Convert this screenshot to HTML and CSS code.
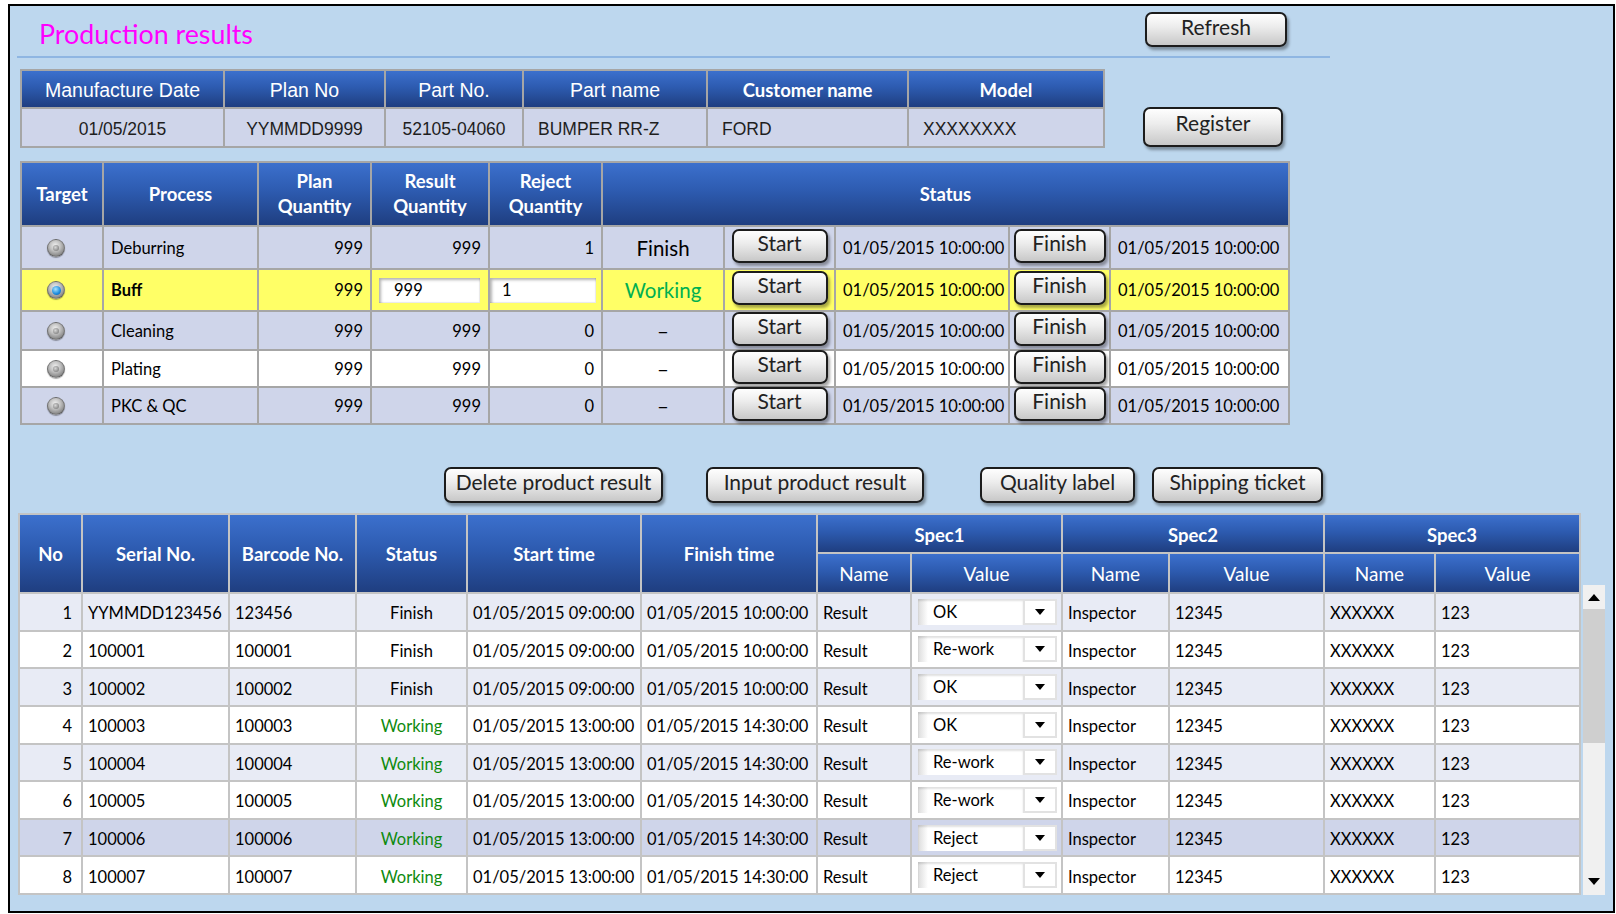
FILE: index.html
```html
<!DOCTYPE html>
<html lang="en">
<head>
<meta charset="utf-8">
<title>Production results</title>
<link rel="stylesheet" href="styles.css">
</head>
<body>
<div class="frame">
  <div class="titlebar">
    <h1 class="title">Production results</h1>
    <button class="btn btn-refresh">Refresh</button>
  </div>

  <div class="info-row">
    <div class="grid info">
      <div class="row head">
        <div class="cell lt">Manufacture Date</div>
        <div class="cell lt">Plan No</div>
        <div class="cell lt">Part No.</div>
        <div class="cell lt">Part name</div>
        <div class="cell hb">Customer name</div>
        <div class="cell hb">Model</div>
      </div>
      <div class="row lav jp">
        <div class="cell">01/05/2015</div>
        <div class="cell">YYMMDD9999</div>
        <div class="cell">52105-04060</div>
        <div class="cell l">BUMPER RR-Z</div>
        <div class="cell l">FORD</div>
        <div class="cell l">XXXXXXXX</div>
      </div>
    </div>
    <button class="btn btn-register">Register</button>
  </div>

  <div class="grid proc">
    <div class="row head">
      <div class="cell">Target</div>
      <div class="cell">Process</div>
      <div class="cell">Plan<br>Quantity</div>
      <div class="cell">Result<br>Quantity</div>
      <div class="cell">Reject<br>Quantity</div>
      <div class="cell span5">Status</div>
    </div>
    <div class="row lav">
      <div class="cell rc"><span class="radio"></span></div>
      <div class="cell l">Deburring</div>
      <div class="cell r">999</div>
      <div class="cell r">999</div>
      <div class="cell r">1</div>
      <div class="cell st">Finish</div>
      <div class="cell"><button class="btn btn-start">Start</button></div>
      <div class="cell l dt">01/05/2015 10:00:00</div>
      <div class="cell"><button class="btn btn-fin">Finish</button></div>
      <div class="cell l dt2">01/05/2015 10:00:00</div>
    </div>
    <div class="row yel">
      <div class="cell rc"><span class="radio on"></span></div>
      <div class="cell l bold">Buff</div>
      <div class="cell r">999</div>
      <div class="cell l0"><span class="inp inp-res">999</span></div>
      <div class="cell l0"><span class="inp inp-rej">1</span></div>
      <div class="cell st wk1">Working</div>
      <div class="cell"><button class="btn btn-start">Start</button></div>
      <div class="cell l dt">01/05/2015 10:00:00</div>
      <div class="cell"><button class="btn btn-fin">Finish</button></div>
      <div class="cell l dt2">01/05/2015 10:00:00</div>
    </div>
    <div class="row lav">
      <div class="cell rc"><span class="radio"></span></div>
      <div class="cell l">Cleaning</div>
      <div class="cell r">999</div>
      <div class="cell r">999</div>
      <div class="cell r">0</div>
      <div class="cell st">–</div>
      <div class="cell"><button class="btn btn-start">Start</button></div>
      <div class="cell l dt">01/05/2015 10:00:00</div>
      <div class="cell"><button class="btn btn-fin">Finish</button></div>
      <div class="cell l dt2">01/05/2015 10:00:00</div>
    </div>
    <div class="row wht">
      <div class="cell rc"><span class="radio"></span></div>
      <div class="cell l">Plating</div>
      <div class="cell r">999</div>
      <div class="cell r">999</div>
      <div class="cell r">0</div>
      <div class="cell st">–</div>
      <div class="cell"><button class="btn btn-start">Start</button></div>
      <div class="cell l dt">01/05/2015 10:00:00</div>
      <div class="cell"><button class="btn btn-fin">Finish</button></div>
      <div class="cell l dt2">01/05/2015 10:00:00</div>
    </div>
    <div class="row lav">
      <div class="cell rc"><span class="radio"></span></div>
      <div class="cell l">PKC &amp; QC</div>
      <div class="cell r">999</div>
      <div class="cell r">999</div>
      <div class="cell r">0</div>
      <div class="cell st">–</div>
      <div class="cell"><button class="btn btn-start">Start</button></div>
      <div class="cell l dt">01/05/2015 10:00:00</div>
      <div class="cell"><button class="btn btn-fin">Finish</button></div>
      <div class="cell l dt2">01/05/2015 10:00:00</div>
    </div>
  </div>

  <div class="actions">
    <button class="btn btn-act btn-del">Delete product result</button>
    <button class="btn btn-act btn-inp">Input product result</button>
    <button class="btn btn-act btn-qual">Quality label</button>
    <button class="btn btn-act btn-ship">Shipping ticket</button>
  </div>

  <div class="main-row">
    <div class="grid results">
      <div class="row head">
        <div class="cell span2r">No</div>
        <div class="cell span2r">Serial No.</div>
        <div class="cell span2r">Barcode No.</div>
        <div class="cell span2r">Status</div>
        <div class="cell span2r">Start time</div>
        <div class="cell span2r">Finish time</div>
        <div class="cell span2c">Spec1</div>
        <div class="cell span2c">Spec2</div>
        <div class="cell span2c">Spec3</div>
      </div>
      <div class="row head sub">
        <div class="cell">Name</div>
        <div class="cell">Value</div>
        <div class="cell">Name</div>
        <div class="cell">Value</div>
        <div class="cell">Name</div>
        <div class="cell">Value</div>
      </div>

      <div class="row m-alt">
        <div class="cell r">1</div>
        <div class="cell l">YYMMDD123456</div>
        <div class="cell l">123456</div>
        <div class="cell">Finish</div>
        <div class="cell l">01/05/2015 09:00:00</div>
        <div class="cell l">01/05/2015 10:00:00</div>
        <div class="cell l">Result</div>
        <div class="cell l0"><div class="dd"><span class="dd-val">OK</span><span class="dd-btn"></span></div></div>
        <div class="cell l">Inspector</div>
        <div class="cell l">12345</div>
        <div class="cell l">XXXXXX</div>
        <div class="cell l">123</div>
      </div>
      <div class="row m-wht">
        <div class="cell r">2</div>
        <div class="cell l">100001</div>
        <div class="cell l">100001</div>
        <div class="cell">Finish</div>
        <div class="cell l">01/05/2015 09:00:00</div>
        <div class="cell l">01/05/2015 10:00:00</div>
        <div class="cell l">Result</div>
        <div class="cell l0"><div class="dd"><span class="dd-val">Re-work</span><span class="dd-btn"></span></div></div>
        <div class="cell l">Inspector</div>
        <div class="cell l">12345</div>
        <div class="cell l">XXXXXX</div>
        <div class="cell l">123</div>
      </div>
      <div class="row m-alt">
        <div class="cell r">3</div>
        <div class="cell l">100002</div>
        <div class="cell l">100002</div>
        <div class="cell">Finish</div>
        <div class="cell l">01/05/2015 09:00:00</div>
        <div class="cell l">01/05/2015 10:00:00</div>
        <div class="cell l">Result</div>
        <div class="cell l0"><div class="dd"><span class="dd-val">OK</span><span class="dd-btn"></span></div></div>
        <div class="cell l">Inspector</div>
        <div class="cell l">12345</div>
        <div class="cell l">XXXXXX</div>
        <div class="cell l">123</div>
      </div>
      <div class="row m-wht">
        <div class="cell r">4</div>
        <div class="cell l">100003</div>
        <div class="cell l">100003</div>
        <div class="cell wk2">Working</div>
        <div class="cell l">01/05/2015 13:00:00</div>
        <div class="cell l">01/05/2015 14:30:00</div>
        <div class="cell l">Result</div>
        <div class="cell l0"><div class="dd"><span class="dd-val">OK</span><span class="dd-btn"></span></div></div>
        <div class="cell l">Inspector</div>
        <div class="cell l">12345</div>
        <div class="cell l">XXXXXX</div>
        <div class="cell l">123</div>
      </div>
      <div class="row m-alt">
        <div class="cell r">5</div>
        <div class="cell l">100004</div>
        <div class="cell l">100004</div>
        <div class="cell wk2">Working</div>
        <div class="cell l">01/05/2015 13:00:00</div>
        <div class="cell l">01/05/2015 14:30:00</div>
        <div class="cell l">Result</div>
        <div class="cell l0"><div class="dd"><span class="dd-val">Re-work</span><span class="dd-btn"></span></div></div>
        <div class="cell l">Inspector</div>
        <div class="cell l">12345</div>
        <div class="cell l">XXXXXX</div>
        <div class="cell l">123</div>
      </div>
      <div class="row m-wht">
        <div class="cell r">6</div>
        <div class="cell l">100005</div>
        <div class="cell l">100005</div>
        <div class="cell wk2">Working</div>
        <div class="cell l">01/05/2015 13:00:00</div>
        <div class="cell l">01/05/2015 14:30:00</div>
        <div class="cell l">Result</div>
        <div class="cell l0"><div class="dd"><span class="dd-val">Re-work</span><span class="dd-btn"></span></div></div>
        <div class="cell l">Inspector</div>
        <div class="cell l">12345</div>
        <div class="cell l">XXXXXX</div>
        <div class="cell l">123</div>
      </div>
      <div class="row m-sel">
        <div class="cell r">7</div>
        <div class="cell l">100006</div>
        <div class="cell l">100006</div>
        <div class="cell wk2">Working</div>
        <div class="cell l">01/05/2015 13:00:00</div>
        <div class="cell l">01/05/2015 14:30:00</div>
        <div class="cell l">Result</div>
        <div class="cell l0"><div class="dd"><span class="dd-val">Reject</span><span class="dd-btn"></span></div></div>
        <div class="cell l">Inspector</div>
        <div class="cell l">12345</div>
        <div class="cell l">XXXXXX</div>
        <div class="cell l">123</div>
      </div>
      <div class="row m-wht">
        <div class="cell r">8</div>
        <div class="cell l">100007</div>
        <div class="cell l">100007</div>
        <div class="cell wk2">Working</div>
        <div class="cell l">01/05/2015 13:00:00</div>
        <div class="cell l">01/05/2015 14:30:00</div>
        <div class="cell l">Result</div>
        <div class="cell l0"><div class="dd"><span class="dd-val">Reject</span><span class="dd-btn"></span></div></div>
        <div class="cell l">Inspector</div>
        <div class="cell l">12345</div>
        <div class="cell l">XXXXXX</div>
        <div class="cell l">123</div>
      </div>
    </div>

    <div class="scrollbar">
      <div class="sb-up"><span class="tri-up"></span></div>
      <div class="sb-thumb"></div>
      <div class="sb-track"><span class="tri-down"></span></div>
    </div>
  </div>
</div>
</body>
</html>
```

FILE: styles.css
```css
* { box-sizing: border-box; }
html, body { margin: 0; padding: 0; background: #fff; }
body { font-family: Lato, "Liberation Sans", sans-serif; color: #000; }

.frame {
  margin: 4px 0 0 8px;
  width: 1607px;
  height: 909px;
  border: 2px solid #000;
  background: #bdd7ee;
  overflow: hidden;
}

/* title bar */
.titlebar {
  display: flex;
  justify-content: space-between;
  align-items: flex-start;
  margin-left: 7px;
  width: 1313px;
  height: 52px;
  padding-right: 43px;
  border-bottom: 2px solid #8fb6e2;
}
.title {
  margin: 0;
  padding: 12px 0 0 22px;
  font: 400 26.8px/1.2 Lato, sans-serif;
  color: #ff00ff;
}

/* buttons */
.btn {
  display: flex;
  align-items: center;
  justify-content: center;
  padding: 0 0 7px;
  border: 2px solid #1c1c1c;
  border-radius: 7px;
  background: linear-gradient(#fefefe, #ededed 40%, #c8c8c8);
  box-shadow: 2px 3px 3px rgba(0, 0, 0, 0.35);
  font: 400 21px/1 Lato, sans-serif;
  color: #222;
  white-space: nowrap;
}
.btn-refresh { margin-top: 6px; width: 142px; height: 35px; }
.btn-register { margin: 38px 0 0 38px; width: 140px; height: 40px; padding-bottom: 9px; }
.btn-start { width: 96px; height: 34px; margin-bottom: 4px; flex: none; }
.btn-fin { width: 92px; height: 34px; margin-bottom: 4px; flex: none; }

/* grids */
.info-row { display: flex; align-items: flex-start; margin: 11px 0 0 10px; }
.grid {
  display: grid;
  gap: 2px;
  padding: 2px;
  background: #a6a6a6;
  width: max-content;
}
.row { display: contents; }
.cell {
  display: flex;
  align-items: center;
  justify-content: center;
  text-align: center;
  font-size: 16.5px;
  line-height: 20px;
  min-width: 0;
  white-space: nowrap;
}
.cell.l { justify-content: flex-start; padding-left: 7px; }
.cell.l0 { justify-content: flex-start; }
.cell.r { justify-content: flex-end; padding-right: 7px; }
.bold { font-weight: 700; }

.head > .cell {
  background: linear-gradient(180deg, #3c70cd 0%, #2d5bb0 45%, #1f3e80 100%);
  color: #fff;
  font-weight: 700;
  font-size: 18.5px;
  line-height: 25px;
}
.head > .cell.lt {
  font: 400 19.5px/1 "Liberation Sans", Arial, sans-serif;
  padding-top: 3px;
}
.head > .cell.hb { padding-top: 2px; }
.lav > .cell { background: #cfd5ea; }
.yel > .cell { background: #ffff66; }
.wht > .cell { background: #ffffff; }

/* info table */
.info {
  grid-template-columns: 201px 159px 136px 182px 199px 194px;
  grid-template-rows: 36px 37px;
}
.jp > .cell {
  font: 400 17.5px/1 "Liberation Sans", Arial, sans-serif;
  color: #1e1e1e;
  padding-top: 4px;
}
.jp > .cell.l { padding-left: 14px; }

/* process table */
.proc {
  margin: 13px 0 0 10px;
  grid-template-columns: 80px 153px 111px 116px 111px 120px 109px 172px 99px 177px;
  grid-template-rows: 62px 41px 40px 37px 35px 35px;
}
.span5 { grid-column: span 5; }
.rc { justify-content: flex-start; padding-left: 25px; }
.st { font-size: 20.5px; }
.wk1 { color: #00b050; }
.dt { justify-content: flex-start; padding-left: 6px; }
.dt2 { justify-content: flex-start; padding-left: 8px; }

.radio {
  display: flex;
  align-items: center;
  justify-content: center;
  width: 18px;
  height: 18px;
  border-radius: 50%;
  border: 1px solid rgba(60, 60, 60, 0.45);
  background: radial-gradient(circle at 45% 35%, #f0f0f0 0%, #c2c2c2 38%, #888 75%, #4e4e4e 100%);
  box-shadow: 0 1px 1px rgba(0, 0, 0, 0.35);
}
.radio::after {
  content: "";
  width: 6px;
  height: 6px;
  border-radius: 50%;
  background: radial-gradient(circle at 40% 40%, #d6d6d6, #6a6a6a);
}
.radio.on::after {
  width: 9px;
  height: 9px;
  background: radial-gradient(circle at 40% 35%, #a6e4ff, #1a8ade 60%, #0b4f9a);
}

.inp {
  display: flex;
  align-items: center;
  height: 25px;
  padding-left: 15px;
  background: #fff;
  box-shadow: inset 2px 2px 3px rgba(0, 0, 0, 0.3), inset -1px -1px 1px rgba(0, 0, 0, 0.08);
  font-size: 16.5px;
}
.inp-res { width: 101px; margin-left: 7px; }
.inp-rej { width: 106px; padding-left: 12px; }

/* action buttons */
.actions { display: flex; margin: 42px 0 0 434px; }
.btn-act { height: 36px; }
.btn-del { width: 219px; }
.btn-inp { width: 218px; margin-left: 43px; }
.btn-qual { width: 155px; margin-left: 56px; }
.btn-ship { width: 171px; margin-left: 17px; }

/* results table */
.main-row { display: flex; align-items: flex-start; margin: 10px 0 0 8px; }
.results {
  background: #c4c4c4;
  grid-template-columns: 61px 145px 125px 109px 172px 174px 92px 149px 105px 153px 109px 143px;
  grid-template-rows: 37px 38px repeat(8, 35.625px);
}
.span2r { grid-row: span 2; }
.span2c { grid-column: span 2; }
.results .head > .cell.span2r { padding-top: 2px; }
.results .head > .cell.span2c { padding-top: 3px; }
.head.sub > .cell { font-weight: 400; font-size: 19px; }
.results .row:not(.head) > .cell { padding-top: 3px; }
.results .cell.l { padding-left: 5px; }
.results .cell.r { padding-right: 9px; }
.m-alt > .cell { background: #e8ebf5; }
.m-wht > .cell { background: #ffffff; }
.m-sel > .cell { background: #cfd5ea; }
.wk2 { color: #0e8a0e; }

.dd { display: flex; width: 139px; height: 26px; margin: 0 0 3px 6px; }
.dd-val {
  flex: 1;
  display: flex;
  align-items: center;
  padding-left: 15px;
  background: linear-gradient(90deg, #dcdcdc 0, #ffffff 10px);
  box-shadow: inset 0 2px 2px rgba(0, 0, 0, 0.12);
  font-size: 16.5px;
}
.dd-btn {
  display: flex;
  align-items: center;
  justify-content: center;
  width: 34px;
  background: #fff;
  border: 2px solid #e2e2e2;
}
.dd-btn::after {
  content: "";
  border-left: 5px solid transparent;
  border-right: 5px solid transparent;
  border-top: 6px solid #000;
}

/* scrollbar */
.scrollbar {
  display: flex;
  flex-direction: column;
  width: 22px;
  height: 310px;
  margin: 72px 0 0 2px;
  background: #f0f0f0;
}
.sb-up { height: 24px; display: flex; align-items: center; justify-content: center; }
.sb-thumb { height: 134px; background: #cfcfcf; }
.sb-track { flex: 1; display: flex; align-items: flex-end; justify-content: center; padding-bottom: 10px; }
.tri-up { border-left: 6px solid transparent; border-right: 6px solid transparent; border-bottom: 7px solid #000; }
.tri-down { border-left: 6px solid transparent; border-right: 6px solid transparent; border-top: 7px solid #000; }
```
